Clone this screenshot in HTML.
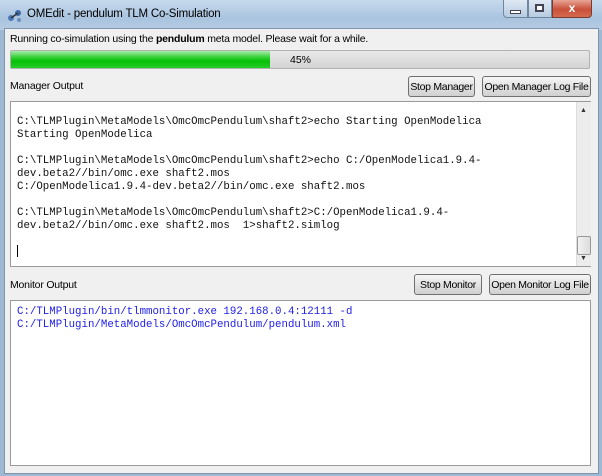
<!DOCTYPE html>
<html><head><style>
body{margin:0;width:602px;height:476px;overflow:hidden;background:#9fb9d3;font-family:"Liberation Sans",sans-serif;font-size:10.5px;color:#000;position:relative}
.abs{position:absolute;white-space:nowrap}
.title{left:0;top:0;width:602px;height:30px;background:linear-gradient(#c7daed,#a9c4df 60%,#b5cbe2)}
.body{left:4px;top:28px;width:593px;height:444px;background:#f0f0f0;border:1px solid #7f95ad}
.btn{position:absolute;height:21px;border:1px solid #707070;border-radius:3px;background:linear-gradient(#f6f6f6,#e2e2e2 50%,#d0d0d0);font-size:10.5px;letter-spacing:-0.3px;line-height:20px;text-align:center;box-sizing:border-box;white-space:nowrap;overflow:hidden}
.ta{position:absolute;background:#fff;border:1px solid #9a9a9a;box-sizing:border-box}
.mono{font-family:"Liberation Mono",monospace;font-size:10.75px;line-height:13px;white-space:pre;position:absolute;left:6px;color:#111}
</style></head><body>
<div class="abs title"></div>
<svg class="abs" style="left:7px;top:7px" width="16" height="16"><circle cx="4" cy="11" r="3" fill="#4a79b6"/><circle cx="11" cy="6" r="3" fill="#3c6aa8"/><line x1="4" y1="11" x2="11" y2="6" stroke="#333" stroke-width="1.5"/><circle cx="12" cy="13" r="2" fill="#6b8fc0"/></svg>
<div class="abs" style="left:27px;top:8px;font-size:11.5px;letter-spacing:-0.2px">OMEdit - pendulum TLM Co-Simulation</div>
<div class="abs" style="left:503px;top:0;width:25px;height:18px;border:1px solid #6f86a0;border-top:none;border-radius:0 0 0 4px;background:linear-gradient(#dfe9f4,#b7cbe0);box-sizing:border-box"></div>
<div class="abs" style="left:510px;top:10px;width:9px;height:2px;background:#fff;border:1px solid #445"></div>
<div class="abs" style="left:528px;top:0;width:24px;height:18px;border:1px solid #6f86a0;border-top:none;background:linear-gradient(#dfe9f4,#b7cbe0);box-sizing:border-box"></div>
<div class="abs" style="left:535px;top:4px;width:9px;height:8px;border:2px solid #445;background:#fff;box-sizing:border-box"></div>
<div class="abs" style="left:552px;top:0;width:40px;height:18px;border:1px solid #7a3b30;border-top:none;border-radius:0 0 4px 0;background:linear-gradient(#e8a595,#c9503a 55%,#d46a4f);color:#fff;font-weight:bold;text-align:center;font-size:12px;line-height:16px;box-sizing:border-box">x</div>
<div class="abs body"></div>
<div class="abs" style="left:10px;top:33px;letter-spacing:-0.2px">Running co-simulation using the <b>pendulum</b> meta model. Please wait for a while.</div>
<div class="abs" style="left:10px;top:50px;width:580px;height:19px;border:1px solid #b2b2b2;border-radius:2px;background:linear-gradient(#e8e8e8,#d4d4d4);box-sizing:border-box"></div>
<div class="abs" style="left:11px;top:51px;width:259px;height:17px;background:linear-gradient(#a8ecaa,#3ad23c 35%,#06c006 60%,#26cd28)"></div>
<div class="abs" style="left:290px;top:54px">45%</div>
<div class="abs" style="left:10px;top:80px;letter-spacing:-0.2px">Manager Output</div>
<div class="btn" style="left:408px;top:76px;width:67px">Stop Manager</div>
<div class="btn" style="left:482px;top:76px;width:109px">Open Manager Log File</div>
<div class="ta" style="left:10px;top:101px;width:581px;height:166px">
<div class="mono" style="top:14px">C:\TLMPlugin\MetaModels\OmcOmcPendulum\shaft2>echo Starting OpenModelica
Starting OpenModelica

C:\TLMPlugin\MetaModels\OmcOmcPendulum\shaft2>echo C:/OpenModelica1.9.4-
dev.beta2//bin/omc.exe shaft2.mos
C:/OpenModelica1.9.4-dev.beta2//bin/omc.exe shaft2.mos

C:\TLMPlugin\MetaModels\OmcOmcPendulum\shaft2>C:/OpenModelica1.9.4-
dev.beta2//bin/omc.exe shaft2.mos  1>shaft2.simlog</div>
<div class="abs" style="left:6px;top:143px;width:1px;height:12px;background:#000"></div>
<div class="abs" style="left:565px;top:0;width:14px;height:164px;background:#ececec;border-left:1px solid #ddd"></div>
<div class="abs" style="left:569px;top:5px;font-size:7px;color:#333">▲</div>
<div class="abs" style="left:566px;top:134px;width:12px;height:17px;border:1px solid #999;border-radius:2px;background:linear-gradient(90deg,#f2f2f2,#dcdcdc)"></div>
<div class="abs" style="left:569px;top:153px;font-size:7px;color:#333">▼</div>
</div>
<div class="abs" style="left:10px;top:279px;letter-spacing:-0.2px">Monitor Output</div>
<div class="btn" style="left:414px;top:274px;width:68px">Stop Monitor</div>
<div class="btn" style="left:489px;top:274px;width:102px">Open Monitor Log File</div>
<div class="ta" style="left:10px;top:300px;width:581px;height:166px">
<div class="mono" style="top:5px;color:#2020e8">C:/TLMPlugin/bin/tlmmonitor.exe 192.168.0.4:12111 -d
C:/TLMPlugin/MetaModels/OmcOmcPendulum/pendulum.xml</div>
</div>
</body></html>
